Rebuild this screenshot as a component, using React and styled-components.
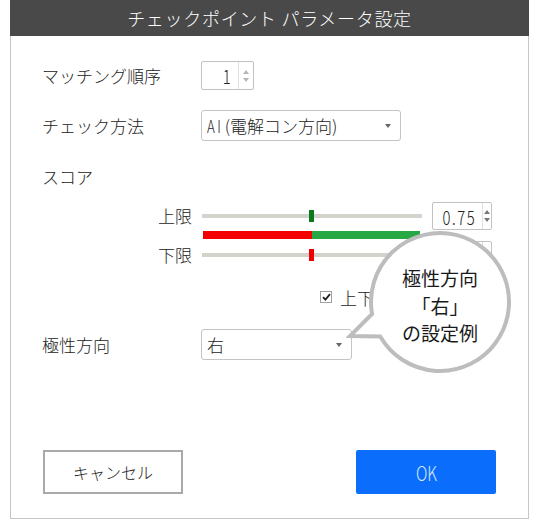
import React from 'react';
import styled, { createGlobalStyle } from 'styled-components';

const GlobalStyle = createGlobalStyle`
  body {
    margin: 0;
    background: #fff;
    font-family: "Noto Sans CJK JP", "Noto Sans", sans-serif;
    font-weight: 300;
    color: #222;
  }
`

const Dialog = styled.div`
  position: relative;
  box-sizing: border-box;
  margin-left: 10px;
  width: 519px;
  height: 519px;
  border: 1px solid #c6c6c6;
  border-top: none;
  display: flex;
  flex-direction: column;
`

const Header = styled.div`
  height: 36px;
  margin: 0 -1px;
  background: #494949;
  color: #fff;
  font-size: 18px;
  letter-spacing: 0.7px;
  display: flex;
  align-items: center;
  justify-content: center;
`

const Body = styled.div`
  display: flex;
  flex-direction: column;
  padding: 0 0 0 31px;
`

const FieldRow = styled.div`
  display: flex;
  align-items: center;
  margin-top: ${p => p.$top}px;
`

const Label = styled.div`
  width: ${p => p.$width || 159}px;
  font-size: 17px;
  line-height: 24px;
  flex-shrink: 0;
`

const Narrow = styled.span`
  display: inline-block;
  transform: scaleX(0.78);
  transform-origin: ${p => p.$origin || 'center'};
  letter-spacing: ${p => p.$spacing || 0}px;
`

const NumberBox = styled.div`
  box-sizing: border-box;
  width: ${p => p.$width}px;
  height: ${p => p.$height}px;
  border: 1px solid #c2c2c2;
  border-radius: 2px;
  background: #fff;
  display: flex;
`

const NumberValue = styled.div`
  flex: 1;
  display: flex;
  align-items: center;
  justify-content: flex-end;
  padding-right: 6px;
  font-size: 19px;
  color: #222;
`

const Spinner = styled.div`
  width: 14px;
  border-left: 1px solid #e0e0e0;
  display: flex;
  flex-direction: column;
  align-items: center;
  justify-content: center;
  gap: 4px;
`

const Arrow = styled.span`
  width: 0;
  height: 0;
  border-left: 3px solid transparent;
  border-right: 3px solid transparent;
  ${p => p.$up
    ? `border-bottom: 4px solid ${p.$color};`
    : `border-top: 4px solid ${p.$color};`}
`

const Select = styled.div`
  box-sizing: border-box;
  width: ${p => p.$width}px;
  height: 31px;
  border: 1px solid #c4c4c4;
  border-radius: 3px;
  background: #fff;
  display: flex;
  align-items: center;
  justify-content: space-between;
  padding: 0 9px 0 5px;
  font-size: 17px;
`

const SelectText = styled.span`
  display: flex;
  align-items: center;
`

const ScoreGroup = styled.div`
  display: flex;
  flex-direction: column;
  margin-left: 116px;
  margin-top: 13px;
`

const SliderRow = styled.div`
  display: flex;
  align-items: center;
  height: 28px;
`

const Track = styled.div`
  position: relative;
  width: 220px;
  height: 4px;
  background: #d3d3cb;
  margin-right: 10px;
`

const Thumb = styled.div`
  position: absolute;
  top: -4px;
  width: 5px;
  height: 12px;
  background: ${p => p.$color};
`

const RangeBar = styled.div`
  display: flex;
  width: 217px;
  height: 8px;
  margin: 1px 0 2px 45px;
  background: #27a845;
`

const RangeLow = styled.div`
  height: 100%;
  background: #f50000;
`

const CheckRow = styled.div`
  display: flex;
  align-items: center;
  margin: 16px 0 0 278px;
  height: 24px;
  font-size: 17px;
`

const CheckLabel = styled.span`
  width: 30px;
  overflow: hidden;
  white-space: nowrap;
`

const CheckBox = styled.div`
  box-sizing: border-box;
  width: 12px;
  height: 12px;
  border: 1px solid #a0a0a0;
  background: #fff;
  display: flex;
  align-items: center;
  justify-content: center;
  margin-right: 8px;
`

const Footer = styled.div`
  margin-top: auto;
  display: flex;
  justify-content: space-between;
  padding: 0 32px 24px 32px;
`

const Button = styled.button`
  box-sizing: border-box;
  width: 140px;
  height: 44px;
  border-radius: ${p => (p.$primary ? 2 : 0)}px;
  border: ${p => (p.$primary ? 'none' : '2px solid #a9a9a9')};
  background: ${p => (p.$primary ? '#0a6dfc' : '#fff')};
  color: ${p => (p.$primary ? '#dcebff' : '#222')};
  font-family: "Noto Sans CJK JP", sans-serif;
  font-weight: 300;
  font-size: ${p => (p.$primary ? 20 : 16)}px;
  padding: 0;
`

const Bubble = styled.div`
  position: absolute;
  left: 335px;
  top: 228px;
  width: 170px;
  height: 148px;
`

const BubbleText = styled.div`
  position: absolute;
  left: 24px;
  top: 36px;
  width: 140px;
  text-align: center;
  font-size: 19px;
  font-weight: 400;
  line-height: 27.5px;
  color: #1a1a1a;
`

const NumberInput = ({ value, width, height }) => (
  <NumberBox $width={width} $height={height}>
    <NumberValue>
      <Narrow $origin="right" $spacing={2}>{value}</Narrow>
    </NumberValue>
    <Spinner>
      <Arrow $up $color={height > 28 ? '#b5b5b5' : '#777'} />
      <Arrow $color={height > 28 ? '#b5b5b5' : '#777'} />
    </Spinner>
  </NumberBox>
)

const Slider = ({ label, pos, color, value }) => (
  <SliderRow>
    <Label $width={44}>{label}</Label>
    <Track>
      <Thumb $color={color} style={{ left: `${pos * 100}%` }} />
    </Track>
    <NumberInput value={value} width={60} height={28} />
  </SliderRow>
)

const SelectBox = ({ width, children }) => (
  <Select $width={width}>
    <SelectText>{children}</SelectText>
    <Arrow $color="#666" />
  </Select>
)

export default function App() {
  const lowPct = 109 / 217

  return (
    <>
      <GlobalStyle />
      <Dialog>
        <Header>チェックポイント パラメータ設定</Header>
        <Body>
          <FieldRow $top={25}>
            <Label>マッチング順序</Label>
            <NumberInput value="1" width={53} height={29} />
          </FieldRow>
          <FieldRow $top={20}>
            <Label>チェック方法</Label>
            <SelectBox width={200}>
              <Narrow $origin="left" $spacing={3}>AI</Narrow>
              <span style={{ marginLeft: -3 }}>(電解コン方向)</span>
            </SelectBox>
          </FieldRow>
          <FieldRow $top={24}>
            <Label>スコア</Label>
          </FieldRow>
          <ScoreGroup>
            <Slider label="上限" pos={0.486} color="#0b7a1c" value="0.75" />
            <RangeBar>
              <RangeLow style={{ width: `${lowPct * 100}%` }} />
            </RangeBar>
            <Slider label="下限" pos={0.486} color="#f00000" value="0.25" />
          </ScoreGroup>
          <CheckRow>
            <CheckBox>
              <svg width="9" height="8" viewBox="0 0 9 8">
                <path d="M1 4.2 L3.4 6.6 L8 1.2" fill="none" stroke="#222" strokeWidth="1.8" />
              </svg>
            </CheckBox>
            <CheckLabel>上下限連動</CheckLabel>
          </CheckRow>
          <FieldRow $top={20}>
            <Label>極性方向</Label>
            <SelectBox width={151}>右</SelectBox>
          </FieldRow>
        </Body>
        <Footer>
          <Button>キャンセル</Button>
          <Button $primary><Narrow>OK</Narrow></Button>
        </Footer>
        <Bubble>
          <svg width="170" height="148" viewBox="0 0 170 148">
            <path
              d="M26.05 85.98 L4 108 L34.24 108.5 A69 69 0 1 0 26.05 85.98 Z"
              fill="#fff"
              stroke="#bdbdbd"
              strokeWidth="4"
              strokeLinejoin="miter"
            />
          </svg>
          <BubbleText>
            極性方向<br />「右」<br />の設定例
          </BubbleText>
        </Bubble>
      </Dialog>
    </>
  )
}
